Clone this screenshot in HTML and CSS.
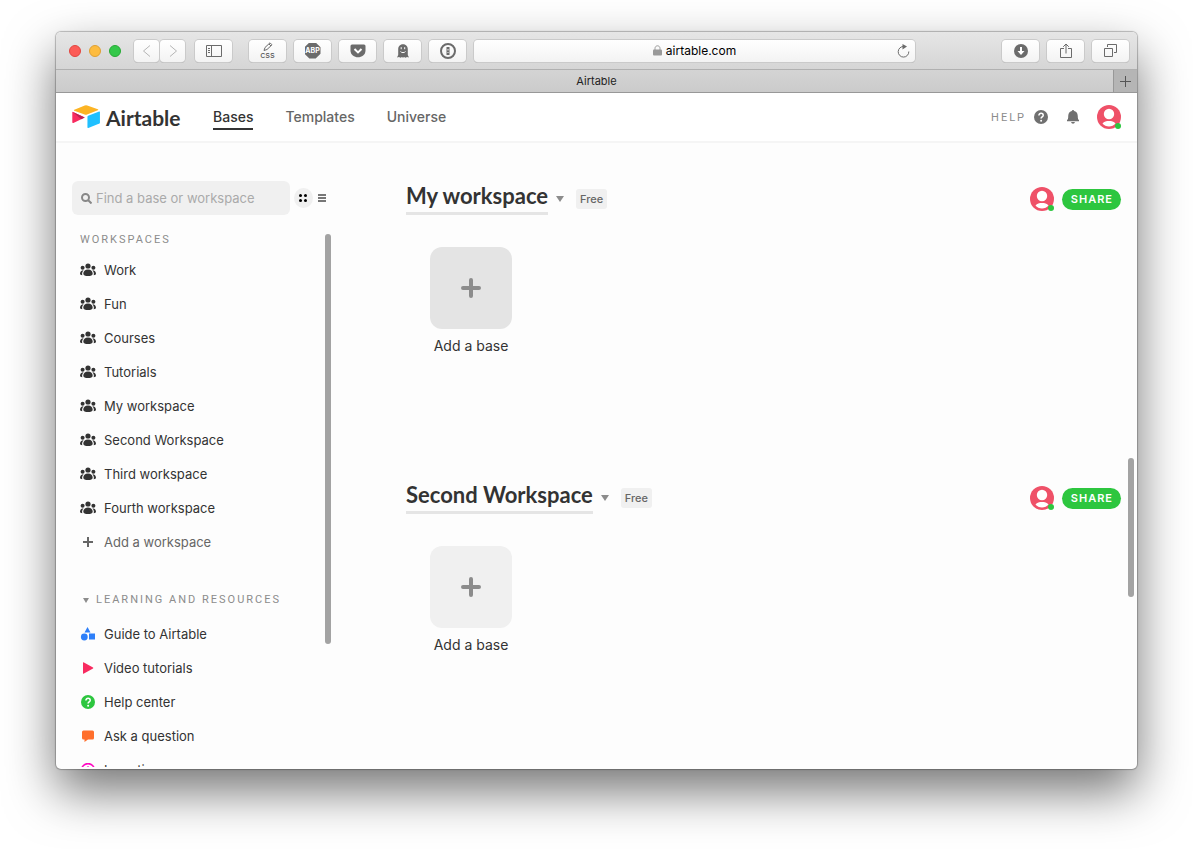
FILE: index.html
```html
<!DOCTYPE html>
<html lang="en">
<head>
<meta charset="utf-8">
<title>Airtable</title>
<link rel="stylesheet" href="styles.css">
</head>
<body>
<!-- shared icons -->
<svg class="defs" width="0" height="0">
	<symbol id="people" viewBox="0 0 16 14">
		<circle cx="8" cy="3" r="2.6"/><circle cx="2.6" cy="4.7" r="2"/><circle cx="13.4" cy="4.7" r="2"/>
		<path d="M8 6.6c3 0 4.7 2 4.7 4.2 0 1.6-2 2.3-4.7 2.3s-4.7-.7-4.7-2.3C3.300 8.600 5 6.600 8 6.600z"/>
		<path d="M3.6 7.3C1.300 7.300 0 9 0 10.800c0 .9.800 1.400 2.300 1.500-.6-2 .2-3.700 1.300-5zM12.400 7.300c2.300 0 3.600 1.700 3.600 3.500 0 .9-.8 1.400-2.300 1.500.6-2-.2-3.700-1.300-5z"/>
	</symbol>
	<symbol id="avatar" viewBox="0 0 24 24">
		<circle cx="12" cy="12" r="12" fill="#ef5168"/>
		<circle cx="12" cy="9" r="5.2" fill="#fff"/>
		<path d="M5.5 18.6C7 16.6 9.5 16 12 16s5 .6 6.500 2.600C17 20.600 14.600 21.600 12 21.600s-5-1-6.500-3z" fill="#fff"/>
	</symbol>
	<symbol id="question" viewBox="0 0 14 14">
		<circle cx="7" cy="7" r="7" fill="currentColor"/>
		<path d="M4.900 5.400c0-2.800 4.300-2.700 4.300 0 0 1.500-2.100 1.500-2.100 3.100" fill="none" stroke="#fff" stroke-width="1.5"/><circle cx="7.1" cy="10.7" r="1" fill="#fff"/>
	</symbol>
	<symbol id="plus" viewBox="0 0 20 20">
		<path d="M10 2v16M2 10h16" stroke="currentColor" stroke-width="4" stroke-linecap="round"/>
	</symbol>
</svg>

<div class="window">
	<div class="toolbar">
		<div class="lights"><i class="red"></i><i class="yellow"></i><i class="green"></i></div>
		<div class="history">
			<button aria-label="Back"><svg width="10" height="14" viewBox="0 0 10 14"><path d="M8 1.5L1.500 7 8 12.500"/></svg></button>
			<button aria-label="Forward"><svg width="10" height="14" viewBox="0 0 10 14"><path d="M2 1.5L8.500 7 2 12.500"/></svg></button>
		</div>
		<button class="tool sidebar-tool" aria-label="Sidebar"><svg width="16" height="14" viewBox="0 0 16 14"><path d="M.5 1.500h15v11H.5zM5.500 1.500v11M2 4.500h2M2 6.500h2M2 8.500h2"/></svg></button>
		<div class="extensions">
			<button class="tool css-tool" aria-label="CSS"><svg width="12" height="9" viewBox="0 0 12 9"><path d="M2 8.500l1-3L8 .8l2 2L5 7.500zM7 2l2 2"/></svg><span>css</span></button>
			<button class="tool" aria-label="Adblock"><b class="abp">ABP</b></button>
			<button class="tool" aria-label="Pocket"><svg width="16" height="14" viewBox="0 0 16 14"><path class="solid" d="M2 .5h12q1.500 0 1.500 1.500v4.500c0 9-15 9-15 0V2Q.5.500 2 .5z"/><path class="light" d="M4.500 5L8 8.400 11.500 5"/></svg></button>
			<button class="tool" aria-label="Ghostery"><svg width="14" height="14" viewBox="0 0 14 14"><path class="solid" d="M2.200 11V5c0-6.500 9.600-6.500 9.600 0v6l1.200 2.500-2-.5-1.500.8L8 13l-1 .8-1-.8-1.500.8L3 13l-2 .5z"/><path class="light thin" d="M5.200 3.200v2M8.700 3.200v2M4.500 7.500c1 1.500 4 1.500 5 0"/></svg></button>
			<button class="tool" aria-label="1Password"><svg width="16" height="16" viewBox="0 0 16 16"><circle cx="8" cy="8" r="7" stroke-width="2"/><path d="M8 4v8" stroke-width="3"/><path class="light thin" d="M8 6v1.500M8 9v1"/></svg></button>
		</div>
		<div class="address">
			<svg width="9" height="11" viewBox="0 0 9 11"><path class="lock" d="M2 5V3.500c0-3.600 5-3.600 5 0V5"/><rect class="lock-body" y="4.500" width="9" height="6" rx="1"/></svg>
			<span>airtable.com</span>
			<button class="reload" aria-label="Reload"><svg width="13" height="14" viewBox="0 0 13 14"><path d="M7 2.500A5.300 5.300 0 1 0 11.800 7.500"/><path class="solid" d="M5.500 0l4.500 2.500-4.500 3z"/></svg></button>
		</div>
		<div class="right-tools">
			<button class="tool" aria-label="Downloads"><svg width="14" height="14" viewBox="0 0 14 14"><circle class="solid" cx="7" cy="7" r="7"/><path class="light" d="M7 3v5"/><path class="arrow-head" d="M3.500 7h7L7 11z"/></svg></button>
			<button class="tool" aria-label="Share page"><svg width="12" height="16" viewBox="0 0 12 16"><path d="M4 5.500H.5v9h11v-9H8M6 10.500V1M3.200 3.800L6 1l2.800 2.800"/></svg></button>
			<button class="tool" aria-label="Tabs"><svg width="13" height="13" viewBox="0 0 13 13"><path d="M.5 4.500h8v8h-8zM3.500 3V.5h9v8H10"/></svg></button>
		</div>
	</div>
	<div class="tabs">
		<div class="tab">Airtable</div>
		<button class="new-tab" aria-label="New tab"><svg width="11" height="11" viewBox="0 0 11 11"><path d="M5.500 0v11M0 5.500h11"/></svg></button>
	</div>

	<header class="topbar">
		<a href="#" class="logo">
			<svg width="29" height="24" viewBox="0 0 30 25">
				<path fill="#fcb424" d="M2.300 4.900L13.200.400q1.300-.5 2.600 0l11 4.100q1 .5 0 1l-11.200 4.300q-1.300.5-2.600 0L2.300 5.900q-.9-.5 0-1z"/>
				<path fill="#20c0ff" d="M16 12.200q0-.7.700-1L28.200 6.900q.8-.2.800.5v11q0 .7-.6 1l-11.500 4.500q-.9.3-.9-.6z"/>
				<path fill="#f82b60" d="M.2 7.700q0-.9.900-.5L13.200 13 1.400 18.700q-1.200.4-1.200-.7z"/>
				<path fill="#bd2153" d="M.7 7.200L9.500 14.900l3.700-1.900z"/>
			</svg>
			<span>Airtable</span>
		</a>
		<nav>
			<a href="#" class="active">Bases</a>
			<a href="#">Templates</a>
			<a href="#">Universe</a>
		</nav>
		<div class="account">
			<a href="#" class="help">HELP <svg width="14" height="14"><use href="#question"/></svg></a>
			<svg class="bell" width="12" height="14" viewBox="0 0 12 14"><path d="M6 0q1 0 1.200 1C10 1.700 10.800 4 10.800 6.500c0 2 .2 2.700 1.200 3.800v.9H0v-.9c1-1.100 1.200-1.800 1.200-3.800C1.200 4 2 1.700 4.800 1Q5 0 6 0zM4 12h4q-.5 1.700-2 1.700T4 12z"/></svg>
			<span class="avatar"><svg width="24" height="24"><use href="#avatar"/></svg></span>
		</div>
	</header>

	<div class="page">
		<aside>
			<div class="search-row">
				<label class="search">
					<svg width="11" height="11" viewBox="0 0 11 11"><circle cx="4.5" cy="4.5" r="3.5"/><path d="M7 7l3.500 3.500"/></svg>
					<input type="text" placeholder="Find a base or workspace" aria-label="Find a base or workspace">
				</label>
				<button class="view grid-view" aria-label="Grid view"><svg width="8" height="8" viewBox="0 0 8 8"><circle cx="1.5" cy="1.5" r="1.5"/><circle cx="6.5" cy="1.5" r="1.5"/><circle cx="1.5" cy="6.5" r="1.5"/><circle cx="6.5" cy="6.5" r="1.5"/></svg></button>
				<button class="view" aria-label="List view"><svg width="8" height="8" viewBox="0 0 8 8"><path d="M0 0h8v2H0zM0 3h8v2H0zM0 6h8v2H0z" fill="#777"/></svg></button>
			</div>
			<div class="lists">
				<div class="list-col">
					<h3>WORKSPACES</h3>
					<ul>
						<li><a href="#"><svg><use href="#people"/></svg>Work</a></li>
						<li><a href="#"><svg><use href="#people"/></svg>Fun</a></li>
						<li><a href="#"><svg><use href="#people"/></svg>Courses</a></li>
						<li><a href="#"><svg><use href="#people"/></svg>Tutorials</a></li>
						<li><a href="#"><svg><use href="#people"/></svg>My workspace</a></li>
						<li><a href="#"><svg><use href="#people"/></svg>Second Workspace</a></li>
						<li><a href="#"><svg><use href="#people"/></svg>Third workspace</a></li>
						<li><a href="#"><svg><use href="#people"/></svg>Fourth workspace</a></li>
						<li><a href="#" class="add"><svg viewBox="0 0 16 14"><path d="M8 2v10M3 7h10" stroke="#666" stroke-width="2"/></svg>Add a workspace</a></li>
					</ul>
					<h3 class="resources"><i class="arrow small"></i>LEARNING AND RESOURCES</h3>
					<ul>
						<li><a href="#"><svg viewBox="0 0 16 14"><g fill="#2d7ff9"><path d="M7.500 0l3 5.500h-6zM9 6.500h6v6H9z"/><circle cx="4.3" cy="10" r="3.4"/></g></svg>Guide to Airtable</a></li>
						<li><a href="#"><svg viewBox="0 0 16 14"><path fill="#f82b60" d="M3.500 1.200L13 6.500q.6.500 0 1l-9.500 5.300q-.5.200-.5-.5V1.700q0-.7.500-.5z"/></svg>Video tutorials</a></li>
						<li><a href="#"><svg class="green-icon"><use href="#question"/></svg>Help center</a></li>
						<li><a href="#"><svg viewBox="0 0 16 14"><path fill="#ff6f2c" d="M3.500 1.500h9q1.500 0 1.500 1.500v6q0 1.500-1.500 1.500H8L4.500 13v-2.500H3.500Q2 10.500 2 9V3q0-1.500 1.500-1.500z"/></svg>Ask a question</a></li>
						<li><a href="#"><svg viewBox="0 0 16 14"><circle cx="8" cy="7" r="6.4" fill="none" stroke="#ff08c2" stroke-width="1.6"/><circle cx="8" cy="4.5" r="1.3" fill="#ff08c2"/></svg>Invention</a></li>
					</ul>
				</div>
				<div class="thumb"></div>
			</div>
		</aside>
		<main>
			<section>
				<div class="title-row">
					<h2>My workspace</h2><i class="arrow"></i><span class="plan">Free</span>
					<div class="people"><span class="avatar"><svg width="24" height="24"><use href="#avatar"/></svg></span><button class="share">SHARE</button></div>
				</div>
				<button class="add-base hover"><span class="tile"><svg width="24" height="24"><use href="#plus"/></svg></span>Add a base</button>
			</section>
			<section>
				<div class="title-row">
					<h2>Second Workspace</h2><i class="arrow"></i><span class="plan">Free</span>
					<div class="people"><span class="avatar"><svg width="24" height="24"><use href="#avatar"/></svg></span><button class="share">SHARE</button></div>
				</div>
				<button class="add-base"><span class="tile"><svg width="24" height="24"><use href="#plus"/></svg></span>Add a base</button>
			</section>
		</main>
		<div class="page-thumb"></div>
	</div>
</div>
</body>
</html>
```
FILE: styles.css
```css
*{
	box-sizing: border-box;
}
body{
	margin: 0;
	padding: 32px 56px 80px;
	height: 100vh;
	background: #fff;
	color: #333;
	font-family: Inter, "Liberation Sans", sans-serif;
	font-size: 13px;
	overflow: hidden;
}
button{
	font: inherit;
	border: 0;
	padding: 0;
	background: none;
}
a{
	color: inherit;
	text-decoration: none;
}
ul, h2, h3{
	margin: 0;
	padding: 0;
	list-style: none;
}
svg{
	display: block;
	flex: none;
}
.defs{
	position: absolute;
}

.window{
	height: 100%;
	display: flex;
	flex-direction: column;
	border-radius: 5px;
	overflow: hidden;
	background: #fdfdfd;
	box-shadow: 0 0 1px 1px rgba(0,0,0,.25), 0 22px 50px rgba(0,0,0,.55);
}

/* browser chrome */
.toolbar{
	flex: none;
	height: 38px;
	display: flex;
	align-items: center;
	padding: 0 8px 0 13px;
	background: linear-gradient(#e6e6e6, #d5d5d5);
	border-bottom: 1px solid #b0b0b0;
}
.toolbar svg{
	fill: none;
	stroke: #6b6b6b;
}
.toolbar .solid{
	fill: #6b6b6b;
	stroke: none;
}
.toolbar .light{
	stroke: #fff;
	stroke-width: 2;
}
.toolbar .thin{
	stroke-width: 1;
}
.toolbar .arrow-head{
	fill: #fff;
	stroke: none;
}
.toolbar .lock{
	stroke: #999;
}
.toolbar .lock-body{
	fill: #999;
	stroke: none;
}
.lights{
	display: flex;
	gap: 8px;
}
.lights i{
	width: 12px;
	height: 12px;
	border-radius: 50%;
}
.red{
	background: #fc5b57;
	border: 1px solid #e2453f;
}
.yellow{
	background: #fdbc40;
	border: 1px solid #dfa033;
}
.green{
	background: #34c84a;
	border: 1px solid #27aa35;
}
.history{
	display: flex;
	gap: 1px;
	margin-left: 13px;
}
.history button, .tool, .address{
	height: 22px;
	display: flex;
	align-items: center;
	justify-content: center;
	background: linear-gradient(#fff, #f3f3f3);
	border-radius: 4px;
	box-shadow: 0 0 0 1px #cacaca, 0 1px 0 #b2b2b2;
}
.history button{
	width: 25px;
}
.history svg{
	stroke: #b5b5b5;
}
.tool{
	width: 37px;
	flex: none;
}
.sidebar-tool{
	margin-left: 10px;
}
.extensions{
	display: flex;
	gap: 8px;
	margin-left: 17px;
}
.css-tool{
	flex-direction: column;
	font-size: 9px;
	line-height: 8px;
	color: #555;
}
.abp{
	width: 16px;
	height: 16px;
	background: #6b6b6b;
	color: #fff;
	font-size: 7px;
	line-height: 16px;
	clip-path: polygon(30% 0, 70% 0, 100% 30%, 100% 70%, 70% 100%, 30% 100%, 0 70%, 0 30%);
}
.address{
	flex: 1;
	margin-left: 8px;
	position: relative;
	gap: 4px;
	font-size: 12px;
	color: #000;
}
.reload{
	position: absolute;
	right: 5px;
	top: 4px;
}
.right-tools{
	display: flex;
	gap: 8px;
	margin-left: 87px;
}
.tabs{
	flex: none;
	height: 23px;
	display: flex;
	background: linear-gradient(#d4d4d4, #cbcbcb);
	border-bottom: 1px solid #989898;
	font-size: 11px;
	color: #222;
}
.tab{
	flex: 1;
	text-align: center;
	line-height: 22px;
	padding-left: 24px;
}
.new-tab{
	width: 24px;
	background: #b5b5b5;
	border-left: 1px solid #989898;
	display: flex;
	align-items: center;
	justify-content: center;
}
.new-tab svg{
	stroke: #555;
}

/* airtable header */
.topbar{
	flex: none;
	height: 50px;
	display: flex;
	align-items: center;
	padding: 0 16px;
	background: #fff;
	border-bottom: 2px solid #f5f5f5;
}
.logo{
	width: 141px;
	display: flex;
	align-items: center;
	gap: 5px;
	font-family: Lato, sans-serif;
	font-size: 21px;
	font-weight: bold;
}
nav{
	display: flex;
	gap: 32px;
	font-size: 14px;
	font-weight: 500;
	color: #666;
}
nav a{
	line-height: 22px;
	padding-top: 1px;
	border-bottom: 2px solid transparent;
}
nav .active{
	color: #333;
	border-color: #333;
}
.account{
	display: flex;
	align-items: center;
	margin-left: auto;
}
.help{
	display: flex;
	align-items: center;
	gap: 8px;
	font-family: Roboto, sans-serif;
	font-size: 11px;
	letter-spacing: 2px;
	color: #8c8c8c;
}
.help svg{
	color: #707070;
}
.bell{
	margin: 0 18px 0 19px;
	fill: #707070;
}
.avatar{
	position: relative;
}
.avatar::after{
	content: "";
	position: absolute;
	right: 0;
	bottom: 0;
	width: 6px;
	height: 6px;
	border-radius: 50%;
	background: #2dc63f;
}

.page{
	flex: 1;
	min-height: 0;
	display: flex;
	position: relative;
}
aside{
	width: 275px;
	flex: none;
	padding: 38px 0 0 16px;
	margin-bottom: 2px;
	overflow: hidden;
}
.search-row{
	display: flex;
	align-items: center;
}
.search{
	width: 218px;
	height: 34px;
	display: flex;
	align-items: center;
	gap: 4px;
	padding-left: 9px;
	margin-right: 4px;
	background: #f0f0f0;
	border-radius: 6px;
}
.search svg{
	fill: none;
	stroke: #888;
	stroke-width: 2;
}
.search input{
	flex: 1;
	min-width: 0;
	border: 0;
	padding: 0;
	background: none;
	font: inherit;
}
.search input::placeholder{
	color: #aaa;
}
.view{
	width: 20px;
	height: 20px;
	display: flex;
	align-items: center;
	justify-content: center;
	border-radius: 50%;
}
.grid-view{
	background: #f0f0f0;
}
.lists{
	display: flex;
	margin-top: 18px;
}
.list-col{
	flex: 1;
	padding-left: 8px;
}
.thumb{
	width: 6px;
	height: 410px;
	margin-top: 1px;
	border-radius: 3px;
	background: #a3a3a3;
}
h3{
	font-family: Roboto, sans-serif;
	font-size: 11px;
	font-weight: normal;
	line-height: 14px;
	letter-spacing: 2px;
	color: #8c8c8c;
	padding-bottom: 6px;
}
.resources{
	display: flex;
	align-items: center;
	margin-top: 34px;
	padding-bottom: 10px;
	white-space: nowrap;
}
li a{
	display: flex;
	align-items: center;
	gap: 8px;
	height: 34px;
}
li svg{
	width: 16px;
	height: 14px;
	fill: #333;
}
.green-icon{
	color: #2dc63f;
}
.add{
	color: #666;
}
.arrow{
	border: 4px solid transparent;
	border-top: 6px solid #8c8c8c;
	border-bottom: 0;
}
.small{
	border-width: 5px 3px 0;
	margin: 0 7px 0 3px;
}

main{
	flex: 1;
	padding: 39px 16px 0 75px;
}
section{
	height: 299px;
}
.title-row{
	display: flex;
	align-items: center;
	height: 34px;
}
h2{
	font-family: Lato, sans-serif;
	font-size: 22px;
	line-height: 26px;
	padding-bottom: 3px;
	border-bottom: 3px solid #e5e5e5;
}
.title-row .arrow{
	margin: 0 12px 0 8px;
}
.plan{
	padding: 0 4px;
	border-radius: 3px;
	background: #f0f0f0;
	color: #666;
	font-size: 11px;
	font-weight: 500;
	line-height: 20px;
}
.people{
	display: flex;
	align-items: center;
	gap: 8px;
	margin-left: auto;
}
.share{
	height: 21px;
	padding: 0 8px 0 9px;
	border-radius: 11px;
	background: #2dc63f;
	color: #fff;
	font-size: 11px;
	font-weight: 600;
	letter-spacing: 1px;
}
.add-base{
	margin: 31px 0 0 24px;
	width: 82px;
	font-size: 14px;
	line-height: 18px;
	color: #333;
}
.tile{
	height: 82px;
	margin-bottom: 8px;
	display: flex;
	align-items: center;
	justify-content: center;
	border-radius: 12px;
	background: #f0f0f0;
	color: #8c8c8c;
}
.tile svg{
	width: 20px;
	height: 20px;
}
.hover .tile{
	background: #e4e4e4;
}
.page-thumb{
	position: absolute;
	right: 3px;
	top: 315px;
	width: 6px;
	height: 139px;
	border-radius: 3px;
	background: #a3a3a3;
}
```
